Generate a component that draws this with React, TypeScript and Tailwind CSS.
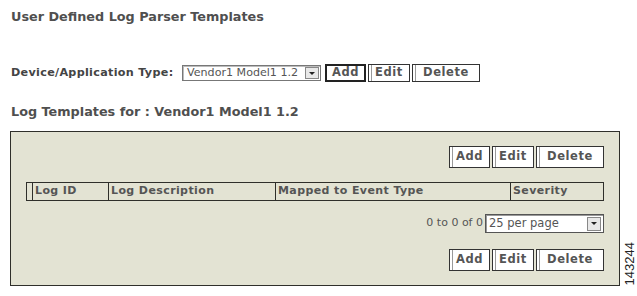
import React from 'react';

const Btn = ({ label, w, strong }: { label: string; w: string; strong?: boolean }) => (
  <button
    className={`${w} shrink-0 h-full bg-white text-[11.5px] font-bold text-[#555] tracking-[0.6px] flex items-center justify-center ${
      strong ? 'border-2 border-[#222]' : 'border border-[#333] shadow-[inset_2px_0_0_#fff,inset_3px_0_0_#9a9a9a]'
    }`}
  >
    {label}
  </button>
);

const ButtonRow = ({ strongAdd }: { strongAdd?: boolean }) => (
  <div className="flex h-[22px] gap-[2px]">
    <Btn label="Add" w="w-[41px]" strong={strongAdd} />
    <Btn label="Edit" w="w-[42px]" />
    <Btn label="Delete" w="w-[68px]" />
  </div>
);

const Arrow = ({ h }: { h: string }) => (
  <div className={`w-[14px] ${h} shrink-0 bg-[#e8e8e8] border border-[#888] flex items-center justify-center`}>
    <div className="w-0 h-0 border-l-[3px] border-r-[3px] border-t-[3px] border-l-transparent border-r-transparent border-t-[#222]" />
  </div>
);

const columns = [
  { label: '', w: 'w-[5px]' },
  { label: 'Log ID', w: 'w-[76px]' },
  { label: 'Log Description', w: 'w-[167px]' },
  { label: 'Mapped to Event Type', w: 'w-[235px]' },
  { label: 'Severity', w: 'flex-1' },
];

export default function App() {
  return (
    <div className="w-[637px] h-[296px] bg-white font-['DejaVu_Sans',Verdana,sans-serif] text-[#4f4f4f] overflow-hidden">
      <div className="pl-[11px] pt-[9px] text-[12.8px] font-bold leading-[16px]">User Defined Log Parser Templates</div>

      <div className="flex items-center pl-[11px] mt-[39px] h-[18px]">
        <span className="text-[11.2px] font-bold text-[#444] tracking-[0.3px] w-[171px] shrink-0">Device/Application Type:</span>
        <div className="w-[139px] shrink-0 h-[16px] bg-white border border-[#777] shadow-[inset_1px_1px_0_#bbb] flex items-center justify-between pl-[4px] pr-[1px]">
          <span className="text-[11.1px] text-[#555]">Vendor1 Model1 1.2</span>
          <Arrow h="h-[12px]" />
        </div>
        <div className="ml-[4px] flex h-[18px] gap-[2px]">
          <Btn label="Add" w="w-[41px]" strong />
          <Btn label="Edit" w="w-[42px]" />
          <Btn label="Delete" w="w-[68px]" />
        </div>
      </div>

      <div className="pl-[11px] mt-[22px] text-[12.8px] font-bold leading-[16px]">Log Templates for : Vendor1 Model1 1.2</div>

      <div className="flex mt-[11px]">
        <div className="ml-[10px] w-[610px] shrink-0 h-[155px] bg-[#e3e3d3] border border-[#2f2f2a] flex flex-col">
          <div className="flex justify-end pr-[15px] mt-[14px]">
            <ButtonRow />
          </div>
          <div className="ml-[15px] w-[578px] h-[19px] mt-[14px] border border-[#2f2f2a] flex">
            {columns.map((c, i) => (
              <div
                key={i}
                className={`${c.w} h-full ${i > 0 ? 'border-l border-[#2f2f2a]' : ''} flex items-center pl-[2px] text-[11px] font-bold text-[#555] tracking-[0.4px]`}
              >
                {c.label}
              </div>
            ))}
          </div>
          <div className="flex justify-end items-center pr-[15px] mt-[13px] h-[19px]">
            <span className="text-[11px] text-[#555] mr-[2px]">0 to 0 of 0</span>
            <div className="w-[119px] h-[19px] bg-white border border-[#555] shadow-[inset_1px_1px_0_#999] flex items-center justify-between pl-[3px] pr-[2px]">
              <span className="text-[11.5px] text-[#555]">25 per page</span>
              <Arrow h="h-[14px]" />
            </div>
          </div>
          <div className="flex justify-end pr-[15px] mt-[16px]">
            <ButtonRow />
          </div>
        </div>
        <div className="ml-[2px] w-[14px] shrink-0 h-[155px] flex items-end justify-center pb-[1px]">
          <span className="[writing-mode:vertical-rl] rotate-180 text-[13px] leading-[13px] text-[#222] font-['Liberation_Sans',Arial,sans-serif]">143244</span>
        </div>
      </div>
    </div>
  );
}
